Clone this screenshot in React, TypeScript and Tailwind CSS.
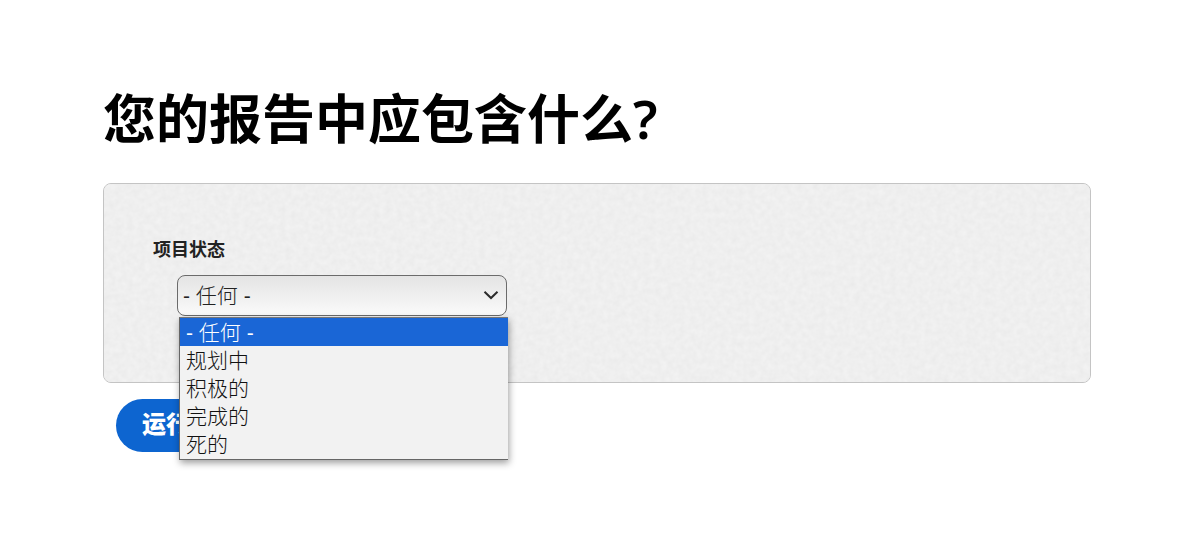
import { useState } from "react";

const options = ["- 任何 -", "规划中", "积极的", "完成的", "死的"];

function PaperTexture() {
  return (
    <svg className="pointer-events-none absolute inset-0 h-full w-full" aria-hidden="true">
      <filter id="paper" x="0" y="0" width="100%" height="100%" colorInterpolationFilters="sRGB">
        <feTurbulence type="fractalNoise" baseFrequency="0.17" numOctaves="2" seed="8" stitchTiles="stitch" />
        <feColorMatrix
          type="matrix"
          values="0.04 0 0 0 0.916  0.04 0 0 0 0.916  0.04 0 0 0 0.916  0 0 0 0 1"
        />
      </filter>
      <rect width="100%" height="100%" filter="url(#paper)" />
    </svg>
  );
}

function StatusField() {
  const [value, setValue] = useState(options[0]);
  return (
    <div className="relative">
      <label
        htmlFor="status"
        className="block text-lg leading-6 font-bold text-[#222222]"
      >
        项目状态
      </label>
      <div className="relative mt-[14px] ml-6 w-[330px] max-w-full font-['Liberation_Sans','Noto_Sans_CJK_SC',sans-serif] text-[21px] font-light">
        <select
          id="status"
          value={value}
          onChange={(e) => setValue(e.target.value)}
          className="block h-[41px] w-full appearance-none rounded-lg border border-[#6b6b6b] bg-linear-to-b from-[#e4e4e4] to-[#fafafa] pr-8 pl-[5px] text-[#222222] outline-none"
        >
          {options.map((o) => (
            <option key={o} value={o}>
              {o}
            </option>
          ))}
        </select>
        <svg
          className="pointer-events-none absolute top-[15px] right-2 h-[10px] w-4"
          viewBox="0 0 16 10"
          fill="none"
          stroke="#2b2b2b"
          strokeWidth="2"
          aria-hidden="true"
        >
          <path d="M1.5 1.7 L8 8 L14.5 1.7" />
        </svg>
        <div
          role="listbox"
          aria-label="项目状态"
          className="absolute top-full -right-px left-[2px] z-10 mt-px flex flex-col border-t border-b border-l border-[#666666] border-t-[#777777] bg-[#f2f2f2] pb-px text-[#111111] shadow-[1px_3px_7px_rgba(0,0,0,0.38)]"
        >
          {options.map((o) => (
            <button
              key={o}
              type="button"
              role="option"
              aria-selected={o === value}
              onClick={() => setValue(o)}
              className="h-7 pt-px pl-[6px] text-left leading-7 aria-selected:bg-[#1a66d6] aria-selected:text-white"
            >
              {o}
            </button>
          ))}
        </div>
      </div>
    </div>
  );
}

export default function App() {
  return (
    <main className="min-h-screen bg-white pt-20 pr-[109px] pb-20 pl-[103px] font-['Noto_Sans','Noto_Sans_CJK_SC',sans-serif]">
      <h1 className="text-[53px] leading-[78px] font-semibold text-black">
        您的报告中应包含什么?
      </h1>
      <form className="mt-[25px]" onSubmit={(e) => e.preventDefault()}>
        <div className="relative rounded-lg border border-[#c4c4c4] bg-[#eeeeee] px-[49px] pt-[53px] pb-[66px]">
          <div className="absolute inset-0 overflow-hidden rounded-[7px]">
            <PaperTexture />
          </div>
          <StatusField />
        </div>
        <button
          type="submit"
          className="mt-4 ml-[13px] h-[53px] rounded-full bg-[#0d65d0] px-[26px] pb-1 text-2xl font-black text-white"
        >
          运行
        </button>
      </form>
    </main>
  );
}
